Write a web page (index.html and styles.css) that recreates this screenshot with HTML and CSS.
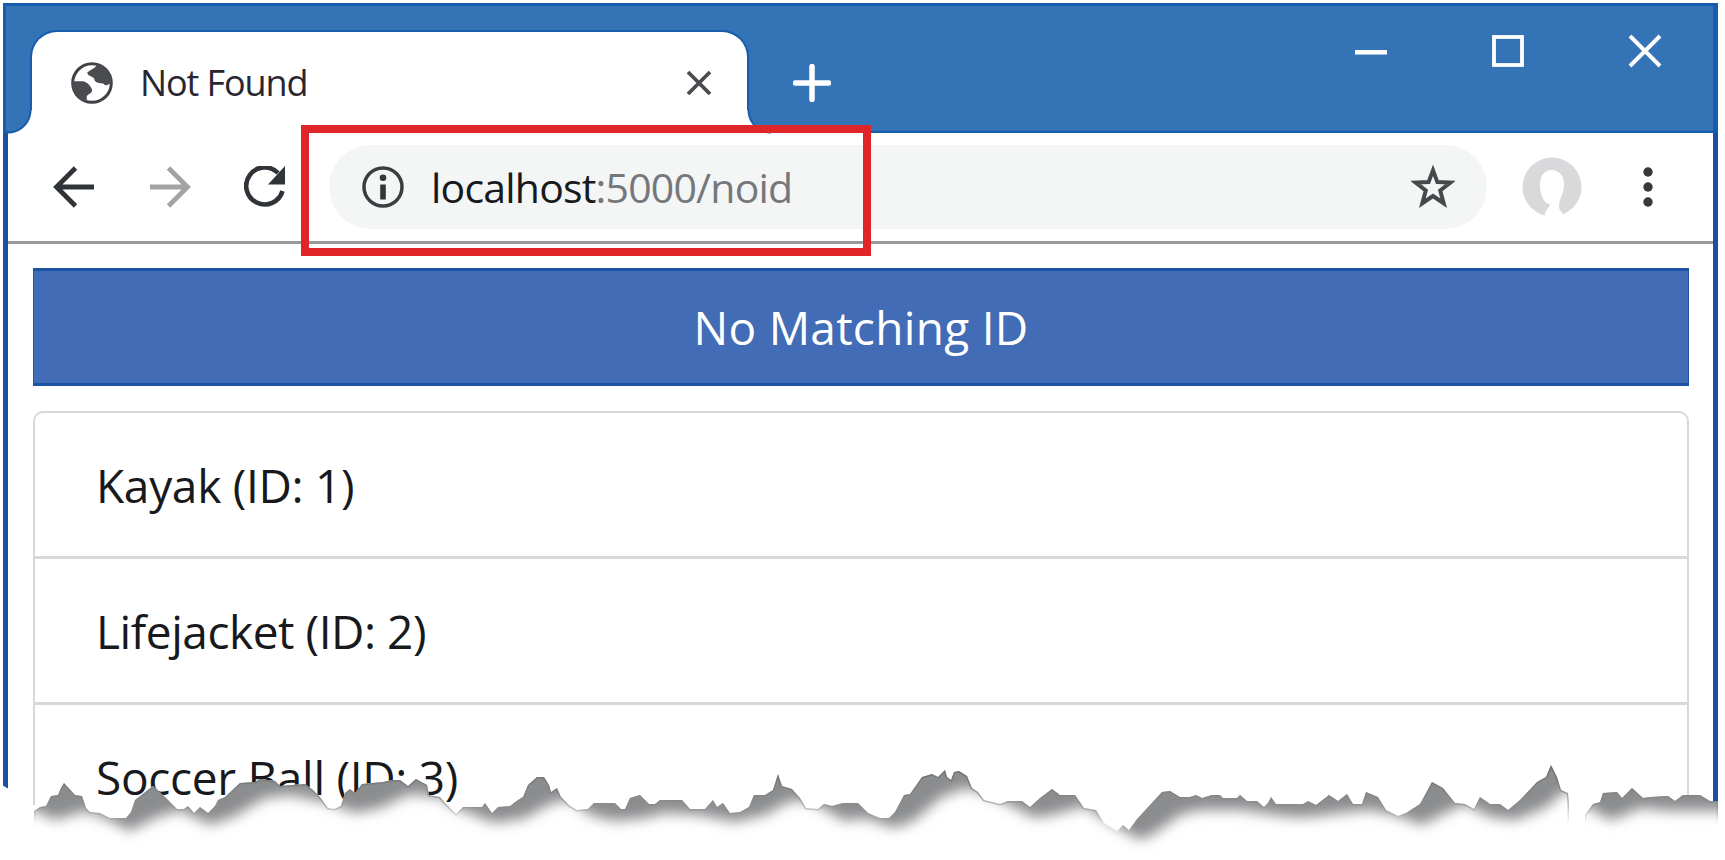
FILE: index.html
```html
<!DOCTYPE html>
<html lang="en">
<head>
<meta charset="utf-8">
<title>Not Found</title>
<link rel="stylesheet" href="styles.css">
</head>
<body>
<div class="browser">
  <header class="titlebar">
    <div class="tab">
      <svg class="globe" viewBox="0 0 42 42"><circle cx="21" cy="21" r="19.3" fill="#fff" stroke="#3f4145" stroke-width="3"/><path d="M26 3 C26 7 20 8 17 11 C18 15 24 13 24 17 C24 21 29 20 33 21 C35 24 37 22 40 20 C40 12 35 5 26 3Z M2 20 H12 C16 21 18 23 20 27 C22 31 16 31 15 34 L15 39 C7 36 2 30 2 20Z" fill="#4a4c50" stroke="#4a4c50" stroke-width="1.500"/></svg>
      <span class="tab-title">Not Found</span>
      <svg class="tab-close" viewBox="0 0 26 26"><path d="M2 2 24 24M24 2 2 24" stroke="#4a4b4e" stroke-width="3.800"/></svg>
    </div>
    <svg class="new-tab" viewBox="0 0 38 38"><path d="M19 2.500V35.500M2.500 19H35.500" stroke="#fff" stroke-width="5.500" stroke-linecap="round"/></svg>
    <div class="controls">
      <svg viewBox="0 0 34 34"><path d="M1 18.300H33" stroke="#fff" stroke-width="4.500"/></svg>
      <svg viewBox="0 0 34 34"><rect x="3" y="3" width="28" height="28" fill="none" stroke="#fff" stroke-width="3.800"/></svg>
      <svg viewBox="0 0 34 34"><path d="M2 2 32 32M32 2 2 32" stroke="#fff" stroke-width="3.900"/></svg>
    </div>
  </header>
  <nav class="toolbar">
    <svg class="nav-icon back" viewBox="0 0 42 42"><path d="M22.500 2 3.500 21 22.500 40M3.500 21H41" fill="none" stroke="#303337" stroke-width="4.800"/></svg>
    <svg class="nav-icon forward" viewBox="0 0 42 42"><path d="M19.500 2 38.500 21 19.500 40M38.500 21H1" fill="none" stroke="#a3a3a3" stroke-width="4.800"/></svg>
    <svg class="nav-icon reload" viewBox="0 0 42 42"><path d="M38.500 25 A18.500 18.500 0 1 1 34 7" fill="none" stroke="#303337" stroke-width="4.600"/><path d="M41 0V18.500H24Z" fill="#303337"/></svg>
    <div class="address">
      <svg class="info" viewBox="0 0 42 42"><circle cx="21" cy="21" r="19" fill="none" stroke="#3b3d40" stroke-width="3.500"/><circle cx="21" cy="11.800" r="3.300" fill="#333538"/><path d="M21 18.500V33.500" stroke="#333538" stroke-width="5.600"/></svg>
      <span class="url"><span class="host">localhost</span><span class="path">:5000/noid</span></span>
      <svg class="star" viewBox="0 0 42 42"><path d="M21 5 25.200 16.300 37.500 16.800 27.900 24.400 31.200 36.500 21 29.600 10.800 36.500 14.100 24.400 4.500 16.800 16.800 16.300Z" fill="none" stroke="#46484b" stroke-width="3.800"/></svg>
    </div>
    <svg class="avatar" viewBox="0 0 60 60"><circle cx="30" cy="30" r="29.500" fill="#d9d9db"/><path d="M18 27C18 8 42 9 42 27C42 37 37 41 37 49C37 53 39 54 41 57V60H23V56C25 52 28 49 28 47C24 48 18 41 18 27Z" fill="#fff"/></svg>
    <svg class="menu" viewBox="0 0 10 40"><circle cx="5" cy="5" r="4.700"/><circle cx="5" cy="20" r="4.700"/><circle cx="5" cy="35" r="4.700"/></svg>
  </nav>
  <main class="page">
    <h1 class="banner">No Matching ID</h1>
    <ul class="list">
      <li><span>Kayak (ID: 1)</span></li>
      <li class="tight"><span>Lifejacket (ID: 2)</span></li>
      <li><span>Soccer Ball (ID: 3)</span></li>
    </ul>
  </main>
</div>
<div class="highlight"></div>
<svg class="torn" viewBox="0 740 1725 120">
  <defs>
    <clipPath id="below-tear">
      <path id="tear-left" d="M34 880V811L40 807 46 806 51 796 58 795 61 788 64 783 75 795 82 796 86 808 90 812 100 813 110 818 126 818 131 812 135 800 153 786 165 797 177 809 184 809 188 806 194 813 200 807 208 813 215 806 218 800 225 797 240 783 255 782 260 779 275 781 280 786 305 784 313 790 320 797 328 808 334 809 341 806 345 793 350 789 355 793 362 784 383 782 392 780 400 780 408 786 416 779 427 785 429 795 440 797 446 804 456 814 463 807 482 807 485 803 492 813 498 807 510 806 518 800 523 797 528 785 537 777 544 777 549 785 551 792 557 788 561 797 570 806 577 810 588 809 594 803 615 803 621 809 625 809 630 798 640 795 649 804 655 804 660 800 682 800 690 809 705 809 713 800 717 807 723 803 730 813 740 812 749 807 754 795 765 795 773 790 778 774 782 786 792 789 800 798 806 808 818 809 824 804 832 806 843 803 858 803 868 813 880 818 889 818 895 812 904 795 910 794 922 777 932 774 938 777 945 770 947 777 951 780 954 772 959 771 967 776 972 788 978 792 984 800 1000 804 1008 801 1022 801 1030 807 1040 798 1052 789 1060 795 1075 795 1084 808 1096 810 1104 823 1117 831 1123 825 1129 830 1137 819 1162 792 1170 791 1180 797 1190 797 1196 795 1202 798 1212 795 1220 795 1223 798 1237 798 1240 795 1247 801 1257 801 1264 807 1268 803 1271 797 1276 804 1303 804 1308 801 1316 805 1329 795 1338 801 1347 794 1353 804 1362 804 1366 792 1378 797 1386 810 1398 816 1406 813 1420 804 1432 782 1443 788 1455 803 1465 804 1474 809 1477 803 1480 797 1490 804 1500 804 1508 810 1520 800 1537 782 1546 777 1551 765 1557 777 1561 790 1568 793 1569 803V880Z"/>
      <path id="tear-right" d="M1585 880V815L1593 804 1600 802 1603 793 1617 792 1622 798 1632 788 1643 798 1650 797 1668 796 1675 801 1683 795 1700 795 1710 801 1718 801V880Z"/>
    </clipPath>
    <filter id="soften" x="-2%" y="-20%" width="104%" height="140%"><feGaussianBlur stdDeviation="6.500"/></filter>
    <linearGradient id="edge" gradientUnits="userSpaceOnUse" x1="0" y1="770" x2="0" y2="824"><stop offset="0" stop-color="#5d5e60"/><stop offset=".6" stop-color="#8a8b8d"/><stop offset="1" stop-color="#8a8b8d" stop-opacity="0"/></linearGradient>
  </defs>
  <path d="M0 784 9 789 34 811V860H0Z M1569 801H1725V860H1569Z" fill="#fff"/>
  <use href="#tear-left" fill="#fff"/><use href="#tear-right" fill="#fff"/>
  <g clip-path="url(#below-tear)">
    <path filter="url(#soften)" fill="#8b8c8e" d="M20 740V806L38 812 55 820 85 811 105 818 130 831 155 818 180 810 210 825 235 816 265 798 290 795 330 803 355 813 380 808 410 794 440 797 456 808 495 823 525 818 550 804 570 799 590 815 615 821 645 818 665 813 700 815 735 822 765 815 790 801 810 801 845 821 865 818 895 828 915 820 940 798 965 788 985 793 1010 805 1035 818 1060 813 1085 806 1110 823 1140 840 1155 833 1180 815 1200 810 1240 810 1290 817 1310 817 1340 813 1370 810 1395 815 1422 825 1445 813 1465 804 1490 817 1515 820 1545 808 1560 795 1572 788 1575 740 1576 740 1582 804 1610 820 1625 815 1640 808 1670 811 1740 811V740Z"/>
    <g fill="none" stroke="url(#edge)" stroke-width="3" opacity=".6"><use href="#tear-left"/><use href="#tear-right"/></g>
  </g>
</svg>
</body>
</html>
```
FILE: styles.css
```css
* { box-sizing: border-box; }
body {
  margin: 0;
  width: 1725px;
  height: 860px;
  overflow: hidden;
  background: #fff;
  font-family: "Open Sans", "Noto Sans", sans-serif;
  color: #17191c;
}
svg { display: block; flex: none; }
.browser {
  width: 1715px;
  height: 798px;
  margin: 3px 0 0 3px;
  border: solid #1d4fa1;
  border-width: 0 5px;
  background: #fff;
}
.titlebar {
  display: flex;
  height: 130px;
  margin: 0 -5px;
  padding-left: 26px;
  background: #3373b6;
  border: 3px solid #175dac;
  border-width: 3px 5px 2px 3px;
}
.tab {
  display: flex;
  align-items: center;
  width: 715px;
  height: 102px;
  margin-top: 26px;
  padding: 3px 35px 4px 39px;
  background: #fff;
  border-radius: 25px 25px 0 0;
  box-shadow: 0 0 0 2px #175dac;
  clip-path: inset(-3px -24px 0 -24px);
  position: relative;
}
.tab::before, .tab::after {
  content: "";
  position: absolute;
  bottom: 0;
  width: 24px;
  height: 24px;
}
.tab::before { left: -24px; background: radial-gradient(circle at 0 0, transparent 21px, #175dac 22px 23px, #fff 24px); }
.tab::after { right: -24px; background: radial-gradient(circle at 100% 0, transparent 21px, #175dac 22px 23px, #fff 24px); }
.globe { width: 42px; height: 42px; }
.tab-title { margin-left: 27px; font-size: 36px; letter-spacing: -1.1px; color: #2a2631; }
.tab-close { width: 26px; height: 26px; margin-left: auto; }
.new-tab { width: 38px; height: 38px; margin: 58px 0 0 46px; }
.controls { display: flex; gap: 103px; margin: 28px 51px 0 auto; }
.controls svg { width: 34px; height: 34px; }
.toolbar {
  display: flex;
  align-items: center;
  height: 111px;
  padding: 1px 60px 1px 45px;
  border-bottom: 3px solid #999a9d;
}
.nav-icon { width: 42px; height: 42px; }
.forward { margin-left: 54px; }
.reload { margin-left: 53px; }
.address {
  display: flex;
  align-items: center;
  width: 1158px;
  height: 84px;
  margin-left: 43px;
  padding: 0 32px 0 33px;
  background: #f4f5f5;
  border-radius: 42px;
}
.info { width: 42px; height: 42px; }
.url { margin-left: 27px; font-size: 41px; letter-spacing: -.8px; white-space: nowrap; }
.path { color: #74777c; }
.star { width: 44px; height: 44px; margin-left: auto; }
.avatar { width: 60px; height: 60px; margin-left: 35px; }
.menu { width: 10px; height: 40px; margin-left: auto; fill: #37393c; }
.page { padding: 24px 24px 0 25px; }
.banner {
  margin: 0;
  height: 118px;
  line-height: 113px;
  border: solid #1d53a5;
  border-width: 3px 1px;
  background: #426cb5;
  color: #fff;
  font-size: 46px;
  font-weight: 400;
  letter-spacing: .3px;
  text-align: center;
}
.list {
  height: 394px;
  margin: 25px 0 0;
  padding: 0;
  list-style: none;
  border: 2px solid #d7d8da;
  border-bottom: 0;
  border-radius: 10px 10px 0 0;
}
.list li {
  height: 146px;
  padding-left: 61px;
  font-size: 46px;
  line-height: 144px;
  letter-spacing: -.3px;
  border-bottom: 3px solid #d7d8da;
}
.list .tight { letter-spacing: -.45px; }
.highlight {
  position: absolute;
  left: 301px;
  top: 125px;
  width: 570px;
  height: 131px;
  border: 8px solid #df2527;
}
.torn { position: absolute; left: 0; top: 740px; width: 1725px; height: 120px; }
```
